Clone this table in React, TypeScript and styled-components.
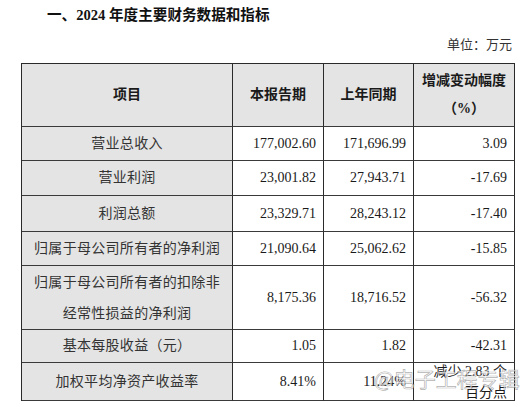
import React from 'react';
import styled, { createGlobalStyle } from 'styled-components';

const GlobalStyle = createGlobalStyle`
  body {
    margin: 0;
    background: #fff;
  }
`;

const fontStack = `"Liberation Serif", "Noto Sans CJK SC", serif`;

const Page = styled.div`
  position: relative;
  width: 525px;
  height: 407px;
  overflow: hidden;
  box-sizing: border-box;
  padding: 5px 11px 0 21px;
  font-family: ${fontStack};
  color: #222;
`;

const Title = styled.h2`
  margin: 0;
  padding-left: 26px;
  font-size: 14.6px;
  line-height: 20px;
  font-weight: 700;
  color: #111;
`;

const Unit = styled.div`
  margin-top: 10px;
  padding-right: 2px;
  text-align: right;
  font-size: 13px;
  line-height: 20px;
  color: #333;
`;

const Table = styled.div`
  margin-top: 8px;
  display: grid;
  grid-template-columns: 211px 91px 90px 101px;
  grid-template-rows: 63px 34px 35px 36px 34px 64px 33px 38px;
  width: 494px;
  box-sizing: border-box;
  border-top: 1px solid #2a2a2a;
  border-left: 1px solid #2a2a2a;
`;

const Cell = styled.div<{ $head?: boolean; $label?: boolean; $lh?: number }>`
  display: flex;
  align-items: center;
  justify-content: ${(p) => (p.$head || p.$label ? 'center' : 'flex-end')};
  text-align: ${(p) => (p.$head || p.$label ? 'center' : 'right')};
  box-sizing: border-box;
  padding: ${(p) => (p.$head || p.$label ? '0 4px' : '0 7px 0 4px')};
  border-right: 1px solid #2a2a2a;
  border-bottom: 1px solid #3a3a3a;
  background: ${(p) => (p.$head || p.$label ? '#e4e4e4' : '#fff')};
  font-size: 14px;
  line-height: ${(p) => p.$lh ?? 20}px;
  font-weight: ${(p) => (p.$head ? 700 : 400)};
  letter-spacing: ${(p) => (p.$label ? '0.3px' : '0')};
  color: ${(p) => (p.$label ? '#333' : '#1a1a1a')};
  white-space: pre-line;
  overflow: visible;
`;

const Watermark = styled.div`
  position: absolute;
  left: 374px;
  top: 366px;
  font-family: "Noto Sans CJK SC", sans-serif;
  font-size: 21px;
  line-height: 24px;
  white-space: nowrap;
  color: rgba(255, 255, 255, 0.7);
  -webkit-text-stroke: 0.7px rgba(110, 110, 110, 0.55);
  pointer-events: none;
`;

type Row = {
  label: string;
  current: string;
  previous: string;
  change: string;
  labelLh?: number;
  changeLh?: number;
};

const rows: Row[] = [
  { label: '营业总收入', current: '177,002.60', previous: '171,696.99', change: '3.09' },
  { label: '营业利润', current: '23,001.82', previous: '27,943.71', change: '-17.69' },
  { label: '利润总额', current: '23,329.71', previous: '28,243.12', change: '-17.40' },
  { label: '归属于母公司所有者的净利润', current: '21,090.64', previous: '25,062.62', change: '-15.85' },
  {
    label: '归属于母公司所有者的扣除非\n经常性损益的净利润',
    current: '8,175.36',
    previous: '18,716.52',
    change: '-56.32',
    labelLh: 31,
  },
  { label: '基本每股收益（元）', current: '1.05', previous: '1.82', change: '-42.31' },
  {
    label: '加权平均净资产收益率',
    current: '8.41%',
    previous: '11.24%',
    change: '减少 2.83 个\n百分点',
    changeLh: 21,
  },
];

const App: React.FC = () => (
  <Page>
    <GlobalStyle />
    <Title>一、2024 年度主要财务数据和指标</Title>
    <Unit>单位：万元</Unit>
    <Table>
      <Cell $head>项目</Cell>
      <Cell $head>本报告期</Cell>
      <Cell $head>上年同期</Cell>
      <Cell $head $lh={28}>
        {'增减变动幅度\n（%）'}
      </Cell>
      {rows.map((row) => (
        <React.Fragment key={row.label}>
          <Cell $label $lh={row.labelLh}>
            {row.label}
          </Cell>
          <Cell>{row.current}</Cell>
          <Cell>{row.previous}</Cell>
          <Cell $lh={row.changeLh}>{row.change}</Cell>
        </React.Fragment>
      ))}
    </Table>
    <Watermark>@电子工程专辑</Watermark>
  </Page>
);

export default App;
